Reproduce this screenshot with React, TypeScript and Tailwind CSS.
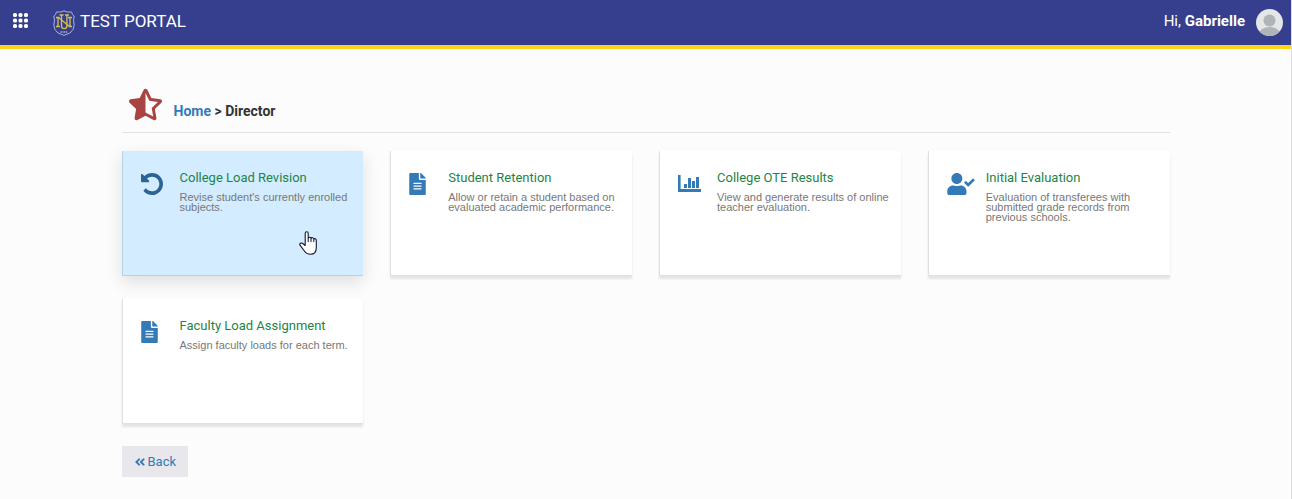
import React from 'react';
import { FaFileAlt, FaUserCheck, FaAngleDoubleLeft, FaStarHalfAlt } from 'react-icons/fa';

function ChartIcon() {
  return (
    <svg viewBox="0 0 23 17" className="mt-[2px] h-[17px] w-[23px]" fill="currentColor" aria-hidden="true">
      <path d="M0 0h2.6v14h20.4v3H0z" />
      <path d="M6 9h3v4H6zM10 3h3v10h-3zM14 6h3v7h-3zM18 2h3v11h-3z" />
    </svg>
  );
}

function UndoIcon() {
  return (
    <svg viewBox="0 128 1536 1536" className="size-[22px]" fill="currentColor" aria-hidden="true">
      <path d="M1536 896q0 156-61 298t-164 245-245 164-298 61q-172 0-327-72.5T177 1387q-7-10-6.5-22.5t8.5-20.5l137-138q10-9 25-9 16 2 23 12 73 95 179 147t225 52q104 0 198.5-40.5T1130 1258t109.5-163.5T1280 896t-40.5-198.5T1130 534 966.5 424.5 768 384q-98 0-188 35.5T420 521l137 138q31 30 14 69-17 40-59 40H64q-26 0-45-19T0 704V256q0-42 40-59 39-17 69 14l130 129q107-101 244.5-156.5T768 128q156 0 298 61t245 164 164 245 61 298z" />
    </svg>
  );
}

function GridIcon() {
  const steps = [2, 7.5, 13];
  return (
    <svg viewBox="0 0 15 15" className="size-[15px]" fill="currentColor" aria-hidden="true">
      {steps.map((y) => steps.map((x) => <rect key={`${x}-${y}`} x={x - 2} y={y - 2} width="4" height="4" rx="1.6" />))}
    </svg>
  );
}

function Seal() {
  return (
    <svg viewBox="0 0 22 26" className="h-[26px] w-[22px]" aria-hidden="true">
      <path
        d="M11 .8Q13 2.6 18.6 2Q18.8 4.8 21.2 6Q19.8 10 21.2 15Q21 20 17 23L11 25.3 5 23Q1 20 .8 15Q2.2 10 .8 6Q3.2 4.8 3.4 2Q9 2.6 11 .8z"
        fill="none"
        stroke="#a9b2e4"
        strokeWidth="1"
        strokeLinejoin="round"
      />
      <g fill="none" stroke="#d6c14e" strokeWidth="1.3">
        <path d="M3 7.5h3.5M5 7.5v9M3 16.5h4M5.5 7.5l11 9M17 7.5v9M15 7.5h4M15.5 16.5h3.5" />
        <path d="M6.5 5h4M8.5 5v10.5q0 3.2 2.7 3.2t2.7-3.2V5M12 5h4" />
      </g>
      <path d="M7.5 22h7" stroke="#a9b2e4" strokeWidth="1.5" strokeDasharray="1.2 .6" />
    </svg>
  );
}

function Avatar() {
  return (
    <svg viewBox="0 0 27 27" className="size-[27px]" role="img" aria-label="Profile">
      <defs>
        <clipPath id="avatar-clip">
          <circle cx="13.5" cy="13.5" r="13.5" />
        </clipPath>
      </defs>
      <g clipPath="url(#avatar-clip)">
        <path d="M0 0h27v27H0z" fill="#e4e6e7" />
        <circle cx="13.5" cy="11.5" r="6" fill="#aeb4b7" />
        <ellipse cx="13.5" cy="25" rx="10.5" ry="7" fill="#aeb4b7" />
      </g>
    </svg>
  );
}

function HandPointer() {
  return (
    <svg viewBox="0 0 18 24" className="pointer-events-none absolute left-[176px] top-[80px] h-[24px] w-[18px]" aria-hidden="true">
      <path
        d="M6.2 14.5V2.4C6.2.2 9.2.2 9.2 2.4V7.5C9.4 5.8 12 5.9 12 7.6 12.4 6.2 14.8 6.4 14.8 8.3 15.4 7.2 17.3 7.6 17.3 9.4V16.5C17.3 20.8 15 23.3 11.5 23.3 8.2 23.3 6.6 22 5 19.5L1 14.2C.2 12.6 2 11.4 3.4 12.3z"
        fill="#fff"
        stroke="#15152b"
        strokeWidth="1.1"
        strokeLinejoin="round"
      />
      <path d="M9.2 7.5v3.6M12 7.8v3.3M14.8 8.4v2.7" stroke="#15152b" strokeWidth="1" />
    </svg>
  );
}

type Module = { title: string; text: string; icon: React.ReactNode; active?: boolean };

const modules: Module[] = [
  { title: 'College Load Revision', text: "Revise student's currently enrolled subjects.", icon: <UndoIcon />, active: true },
  { title: 'Student Retention', text: 'Allow or retain a student based on evaluated academic performance.', icon: <FaFileAlt className="h-[22px] w-[17px]" /> },
  { title: 'College OTE Results', text: 'View and generate results of online teacher evaluation.', icon: <ChartIcon /> },
  { title: 'Initial Evaluation', text: 'Evaluation of transferees with submitted grade records from previous schools.', icon: <FaUserCheck className="h-[22px] w-[28px]" /> },
  { title: 'Faculty Load Assignment', text: 'Assign faculty loads for each term.', icon: <FaFileAlt className="h-[22px] w-[17px]" /> },
];

function ModuleCard({ title, text, icon, active }: Module) {
  const tone = active
    ? 'border-[#b5d2e6] bg-[#d4ecff] text-[#2a6496] shadow-[0_6px_16px_rgba(0,0,0,0.12)]'
    : 'border-[#e0e0e0] bg-white text-[#337ab7] shadow-[0_3px_2px_#e4e4e4]';
  return (
    <a href="#" className={`relative flex min-h-[125px] border-b border-l pl-[18px] pr-2 pt-[18px] ${tone}`}>
      <span className="w-[39px] shrink-0 pt-1">{icon}</span>
      <span className="block">
        <span className="block text-[13px] leading-[18px] text-[#1e8449]">{title}</span>
        <span className="mt-[5px] block font-['Liberation_Sans',sans-serif] text-[11px] leading-[10px] text-[#777777]">{text}</span>
      </span>
      {active && <HandPointer />}
    </a>
  );
}

export default function App() {
  return (
    <div className="min-h-screen border-r border-[#dddddd] bg-[#fcfcfc] font-['Roboto',sans-serif]">
      <header className="flex h-[49px] items-center border-b-4 border-[#ffd31a] bg-[#353f8e] pl-[13px] pr-2 text-white">
        <button type="button" aria-label="Applications" className="mr-[25px] pb-[5px]">
          <GridIcon />
        </button>
        <Seal />
        <span className="ml-[5px] pb-1 text-[17px] leading-[24px]">TEST PORTAL</span>
        <span className="ml-auto mr-[11px] pb-[3px] text-[15px] leading-[20px]">
          Hi, <b>Gabrielle</b>
        </span>
        <Avatar />
      </header>
      <main className="mx-auto max-w-[1048px] pt-[39px]">
        <div className="flex h-[45px] border-b border-[#e3e3e3] pl-[7px]">
          <FaStarHalfAlt className="h-[33px] w-[33px] text-[#a94442]" />
          <nav aria-label="Breadcrumb" className="ml-[12px] pt-[13px] text-[14px] font-bold leading-[20px] text-[#333333]">
            <a href="#" className="text-[#337ab7]">Home</a> &gt; Director
          </nav>
        </div>
        <div className="mt-[18px] grid grid-cols-4 gap-x-[27px] gap-y-[23px]">
          {modules.map((m) => (
            <ModuleCard key={m.title} {...m} />
          ))}
        </div>
        <button type="button" className="mt-[22px] flex h-[31px] items-center gap-[2px] bg-[#e7e7ec] px-3 text-[13px] text-[#337ab7]">
          <FaAngleDoubleLeft className="size-[12px]" />
          Back
        </button>
      </main>
    </div>
  );
}
